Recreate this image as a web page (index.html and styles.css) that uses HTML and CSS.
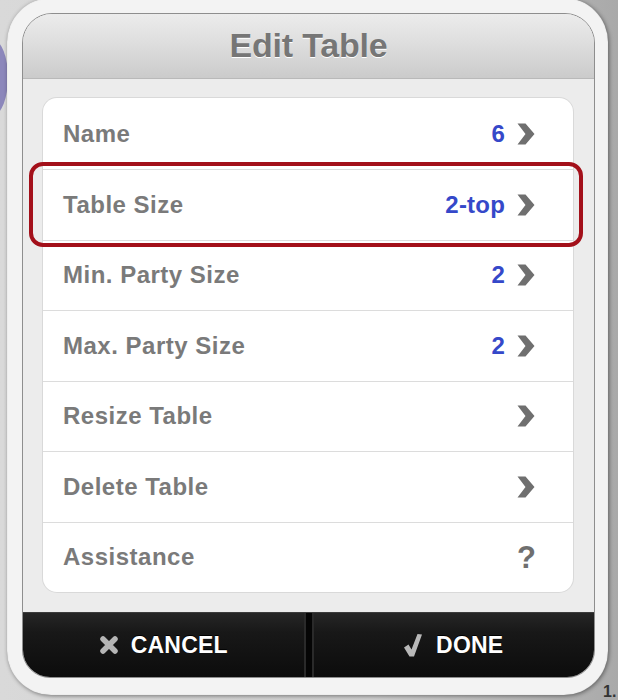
FILE: index.html
```html
<!DOCTYPE html>
<html>
<head>
<meta charset="utf-8">
<link rel="stylesheet" href="styles.css">
</head>
<body>
<div class="blob"></div>
<div class="frame">
  <div class="dialog">
    <div class="header"><h1 class="title">Edit Table</h1></div>
    <div class="content">
      <div class="card">
        <div class="row first"><span class="label">Name</span><span class="value">6</span><svg class="chev" viewBox="0 0 18 22"><polygon points="0.5,0.5 8.5,0.5 17.5,11 8.5,21.5 0.5,21.5 8.5,11"/></svg></div>
        <div class="row highlight"><span class="label">Table Size</span><span class="value">2-top</span><svg class="chev" viewBox="0 0 18 22"><polygon points="0.5,0.5 8.5,0.5 17.5,11 8.5,21.5 0.5,21.5 8.5,11"/></svg></div>
        <div class="row"><span class="label">Min. Party Size</span><span class="value">2</span><svg class="chev" viewBox="0 0 18 22"><polygon points="0.5,0.5 8.5,0.5 17.5,11 8.5,21.5 0.5,21.5 8.5,11"/></svg></div>
        <div class="row"><span class="label">Max. Party Size</span><span class="value">2</span><svg class="chev" viewBox="0 0 18 22"><polygon points="0.5,0.5 8.5,0.5 17.5,11 8.5,21.5 0.5,21.5 8.5,11"/></svg></div>
        <div class="row"><span class="label">Resize Table</span><svg class="chev" viewBox="0 0 18 22"><polygon points="0.5,0.5 8.5,0.5 17.5,11 8.5,21.5 0.5,21.5 8.5,11"/></svg></div>
        <div class="row"><span class="label">Delete Table</span><svg class="chev" viewBox="0 0 18 22"><polygon points="0.5,0.5 8.5,0.5 17.5,11 8.5,21.5 0.5,21.5 8.5,11"/></svg></div>
        <div class="row"><span class="label">Assistance</span><span class="help">?</span></div>
      </div>
    </div>
    <div class="footer">
      <div class="btn">
        <svg class="icon-x" viewBox="0 0 20 20"><path d="M4 4 L16 16 M16 4 L4 16"/></svg>
        <span class="btn-text">CANCEL</span>
      </div>
      <div class="divider"></div>
      <div class="btn">
        <svg class="icon-check" viewBox="0 0 18 24"><polygon points="0,14.5 4.5,11.5 7.5,16.5 13.5,1 18,1.5 10,23.5 5.5,23.5"/></svg>
        <span class="btn-text">DONE</span>
      </div>
    </div>
  </div>
</div>
<span class="corner-num">1.</span>
</body>
</html>
```

FILE: styles.css
```css
html, body {
  margin: 0;
  padding: 0;
}
body {
  width: 618px;
  height: 700px;
  overflow: hidden;
  position: relative;
  background: linear-gradient(90deg, #d9d9d9 0%, #cfcfcf 60%, #a9a9a9 100%);
  font-family: "Liberation Sans", Arial, Helvetica, sans-serif;
}
.blob {
  position: absolute;
  left: -22px;
  top: 40px;
  width: 30px;
  height: 75px;
  border-radius: 50%;
  background: #8c87bb;
}
.frame {
  position: relative;
  margin: -2px 0 0 7px;
  width: 601px;
  height: 697px;
  box-sizing: border-box;
  padding: 15px 13px 17px 15px;
  background: #f3f3f3;
  border-radius: 44px;
  box-shadow: 1px 1px 4px rgba(0,0,0,0.45), inset 0 0 1px rgba(0,0,0,0.25);
}
.dialog {
  width: 573px;
  height: 665px;
  box-sizing: border-box;
  border: 1px solid #8e8e8e;
  border-radius: 30px 30px 28px 28px;
  overflow: hidden;
  display: flex;
  flex-direction: column;
  background: #ececec;
}
.header {
  height: 64px;
  flex: none;
  border-bottom: 1px solid #b9b9b9;
  background: linear-gradient(180deg, #ececec 0%, #dedede 45%, #cbcbcb 100%);
  display: flex;
  align-items: center;
  justify-content: center;
}
.title {
  margin: 0;
  font-size: 34px;
  font-weight: bold;
  color: #767676;
  text-shadow: 0 1px 0 #ffffff;
  letter-spacing: -0.2px;
  padding-bottom: 2px;
}
.content {
  flex: none;
  height: 533px;
  box-sizing: border-box;
  padding: 19px 21px 20px 20px;
  background: #ececec;
}
.card {
  background: #ffffff;
  border-radius: 14px;
  box-shadow: 0 0 0 1px #d9d9d9;
}
.row {
  position: relative;
  display: flex;
  align-items: center;
  height: 69.5px;
  border-top: 1px solid #dcdcdc;
  padding: 0 38px 0 20px;
}
.row.first {
  height: 71px;
  border-top: none;
}
.label {
  flex: 1;
  font-size: 24px;
  font-weight: bold;
  color: #7a7a7a;
  letter-spacing: 0.5px;
}
.value {
  font-size: 24px;
  font-weight: bold;
  color: #3548c9;
  letter-spacing: 0.2px;
  margin-right: 12px;
}
.chev {
  width: 18px;
  height: 22px;
  fill: #6f6f6f;
  flex: none;
}
.help {
  width: 18px;
  text-align: center;
  font-size: 31px;
  font-weight: bold;
  color: #6f6f6f;
  line-height: 1;
}
.highlight::after {
  content: "";
  position: absolute;
  top: -8px;
  bottom: -7px;
  left: -14px;
  right: -10px;
  border: 4px solid #a3101a;
  border-radius: 14px;
  pointer-events: none;
}
.footer {
  flex: 1;
  display: flex;
  background: linear-gradient(180deg, #262626 0%, #181818 30%, #0c0c0c 100%);
  border-top: 1px solid #3c3c3c;
}
.btn {
  flex: 1;
  display: flex;
  align-items: center;
  justify-content: center;
  gap: 12px;
}
.btn-text {
  font-size: 23px;
  font-weight: bold;
  color: #ffffff;
  text-shadow: 0 -1px 0 #000;
  letter-spacing: 0.2px;
}
.divider {
  width: 6px;
  flex: none;
  background: #050505;
  border-left: 2px solid #2a2a2a;
  border-right: 2px solid #2a2a2a;
}
.icon-x {
  width: 20px;
  height: 20px;
  stroke: #b5b5b5;
  stroke-width: 5.5;
  stroke-linecap: round;
  fill: none;
}
.icon-check {
  width: 18px;
  height: 24px;
  fill: #b8b8b8;
  margin-right: 2px;
}
.corner-num {
  position: absolute;
  left: 603px;
  top: 683px;
  font-size: 16px;
  color: #333;
  font-weight: bold;
}
```
